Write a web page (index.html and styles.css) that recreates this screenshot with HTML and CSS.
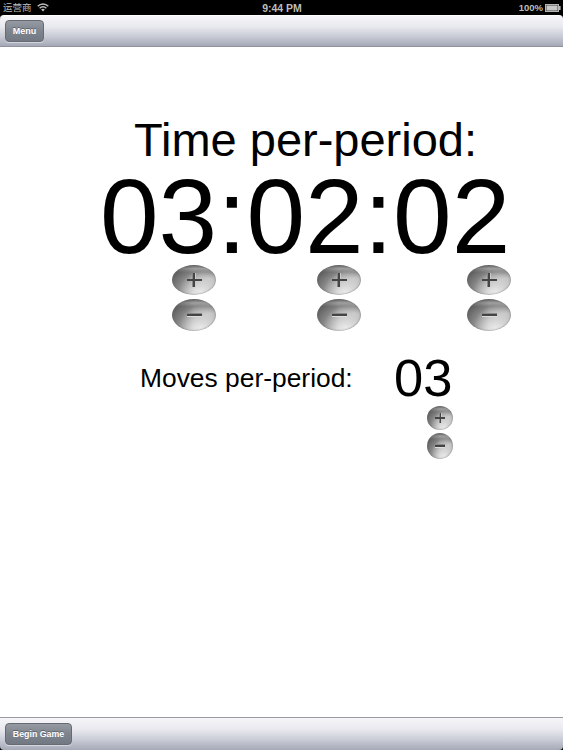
FILE: index.html
```html
<!DOCTYPE html>
<html lang="en">
<head>
    <meta charset="UTF-8">
    <meta name="viewport" content="width=device-width, initial-scale=1.0">
    <title>Chess Clock</title>
    <link rel="stylesheet" href="styles.css">
</head>
<body>
    <div class="screen">
        <div class="status-bar">
            <div class="carrier">
                <span>运营商</span>
                <svg class="wifi" width="12" height="9" viewBox="0 0 12 9" fill="none" stroke="#bdbdbd" stroke-width="1.4">
                    <path d="M0.7 3.3 C3.6 0.2 8.4 0.2 11.3 3.3"/>
                    <path d="M2.6 5.3 C4.5 3.3 7.5 3.3 9.4 5.3"/>
                    <path d="M4.1 6.6 Q6 5.1 7.9 6.6 L6 8.6 Z" fill="#bdbdbd" stroke="none"/>
                </svg>
            </div>
            <div class="clock">9:44 PM</div>
            <div class="power">
                <span>100%</span>
                <svg width="16" height="8" viewBox="0 0 16 8">
                    <rect x="0.5" y="0.5" width="13" height="7" fill="#444" stroke="#b5b5b5"/>
                    <rect x="1.5" y="1.5" width="11" height="5" fill="#c8c8c8"/>
                    <rect x="14" y="2" width="1.6" height="4" fill="#b5b5b5"/>
                </svg>
            </div>
        </div>

        <div class="toolbar top">
            <button class="bar-button menu">Menu</button>
        </div>

        <main class="settings">
            <h1 class="title">Time per-period:</h1>
            <div class="time">03:02:02</div>
            <div class="steppers">
                <div class="stepper">
                    <button class="round plus"></button>
                    <button class="round minus"></button>
                </div>
                <div class="stepper">
                    <button class="round plus"></button>
                    <button class="round minus"></button>
                </div>
                <div class="stepper">
                    <button class="round plus"></button>
                    <button class="round minus"></button>
                </div>
            </div>
            <div class="moves">
                <div class="moves-label">Moves per-period:</div>
                <div class="moves-count">03</div>
            </div>
            <div class="stepper small">
                <button class="round plus"></button>
                <button class="round minus"></button>
            </div>
        </main>

        <div class="toolbar bottom">
            <button class="bar-button begin">Begin Game</button>
        </div>
    </div>
</body>
</html>
```

FILE: styles.css
```css
body {
    margin: 0;
    background-color: #000;
    font-family: "Liberation Sans", Arial, "Noto Sans CJK SC", sans-serif;
}
.screen {
    display: flex;
    flex-direction: column;
    height: 750px;
    overflow: hidden;
}
.status-bar {
    display: grid;
    grid-template-columns: 1fr auto 1fr;
    align-items: center;
    height: 15px;
    padding: 0 2px 0 3px;
    color: #bdbdbd;
    font-size: 9.5px;
    line-height: 14px;
}
.carrier,
.power {
    display: flex;
    align-items: center;
}
.carrier {
    gap: 5px;
}
.power {
    justify-content: flex-end;
    gap: 2px;
    font-weight: bold;
}
.clock {
    font-size: 10.5px;
    font-weight: bold;
}
.toolbar {
    display: flex;
    align-items: center;
    box-sizing: border-box;
    padding: 0 5px;
    background: linear-gradient(#f6f6f9, #e9eaef 35%, #c9cbd5 68%, #a5a9b7);
}
.top {
    height: 32px;
    border-top: 1px solid #fff;
    border-bottom: 1px solid #8f929d;
    border-radius: 4px 4px 0 0;
}
.bottom {
    height: 33px;
    border-top: 1px solid #999ba1;
    border-radius: 0 0 4px 4px;
}
.bar-button {
    box-sizing: border-box;
    height: 22px;
    padding: 0;
    border: 1px solid #656a73;
    border-radius: 4px;
    background: linear-gradient(#969ba3, #7e848d 50%, #737983);
    box-shadow: 0 1px 0 #d4d6df;
    color: #fff;
    font-family: inherit;
    font-size: 9px;
    font-weight: bold;
    line-height: 20px;
    text-shadow: 0 -1px 0 #5d626b;
}
.menu {
    width: 39px;
}
.begin {
    width: 67px;
    font-size: 8.8px;
}
.settings {
    flex: 1;
    padding-top: 68px;
    background-color: #fff;
    color: #000;
}
.title {
    margin: 0 0 3px 134px;
    font-size: 47px;
    font-weight: normal;
    line-height: 50px;
}
.time {
    margin-left: 100px;
    font-size: 105.4px;
    line-height: 97px;
}
.steppers {
    display: grid;
    grid-template-columns: 145px 150px 44px;
    padding-left: 172px;
}
.stepper {
    display: flex;
    flex-direction: column;
    gap: 4px;
    width: 44px;
}
.round {
    display: grid;
    place-items: center;
    height: 30px;
    padding: 0;
    border: none;
    border-radius: 50%;
    background:
        radial-gradient(ellipse at 65% 90%, rgba(255, 255, 255, 0.6), rgba(255, 255, 255, 0) 55%),
        radial-gradient(ellipse at 85% 45%, rgba(255, 255, 255, 0.35), rgba(255, 255, 255, 0) 40%),
        linear-gradient(90deg, rgba(40, 40, 40, 0.5), rgba(80, 80, 80, 0) 50%),
        linear-gradient(#5f5f5f, #a0a0a0 12%, #848484 24%, #a0a0a0 45%, #b8b8b8 70%, #d0d0d0);
    box-shadow: inset 0 0 2px #666;
}
.minus {
    height: 32px;
}
/* plus and minus signs */
.round::before,
.round::after {
    content: "";
    grid-area: 1 / 1;
    width: 15px;
    height: 2px;
    background-color: #444;
    box-shadow: 0 1px 0 #ddd, 0 -1px 0 #888;
}
.round::after {
    width: 2px;
    height: 14px;
    box-shadow: 1px 0 0 #ccc, -1px 0 0 #888;
}
.plus::before {
    position: relative;
    z-index: 1;
    box-shadow: none;
}
.minus::after {
    display: none;
}
.moves {
    display: flex;
    align-items: center;
    height: 50px;
    margin: 22px 0 0 140px;
}
.moves-label {
    width: 254px;
    font-size: 26.4px;
    line-height: 30px;
}
.moves-count {
    font-size: 52.5px;
    line-height: 50px;
}
.small {
    gap: 3px;
    width: 26px;
    margin: 3px 0 0 427px;
}
.small .plus {
    height: 24px;
}
.small .minus {
    height: 26px;
}
.small .round::before {
    width: 10px;
}
.small .round::after {
    width: 1px;
    height: 10px;
}
```
